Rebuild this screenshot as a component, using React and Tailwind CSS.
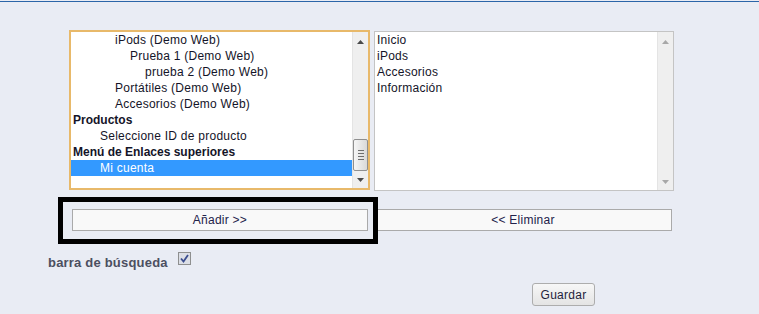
import React from 'react';

// left list: [label, indent(px), bold, selected]
const LEFT_ITEMS = [
  ['iPods (Demo Web)', 44, false],
  ['Prueba 1 (Demo Web)', 59, false],
  ['prueba 2 (Demo Web)', 74, false],
  ['Portátiles (Demo Web)', 44, false],
  ['Accesorios (Demo Web)', 44, false],
  ['Productos', 2, true],
  ['Seleccione ID de producto', 29, false],
  ['Menú de Enlaces superiores', 2, true],
  ['Mi cuenta', 29, false, true],
];

const RIGHT_ITEMS = ['Inicio', 'iPods', 'Accesorios', 'Información'];

const ArrowUp = ({ dim }) => (
  <svg width="7" height="4" viewBox="0 0 7 4">
    <path d="M0 4 L3.5 0 L7 4 Z" fill={dim ? '#a8a8a8' : '#4a4a4a'} />
  </svg>
);

const ArrowDown = ({ dim }) => (
  <svg width="7" height="4" viewBox="0 0 7 4">
    <path d="M0 0 L3.5 4 L7 0 Z" fill={dim ? '#a8a8a8' : '#4a4a4a'} />
  </svg>
);

const Scrollbar = ({ thumb, dim }) => (
  <div className="w-4 h-full bg-[#efefef] border-l border-[#e4e4e4] flex flex-col items-center">
    <div className="h-[17px] w-full flex items-center justify-center pt-[3px]">
      <ArrowUp dim={dim} />
    </div>
    <div className="flex-1 w-full flex flex-col justify-end">
      {thumb && (
        <div className="mx-auto mb-[3px] w-[15px] h-[32px] rounded-[2px] border border-[#8f8f8f] bg-gradient-to-r from-[#f6f6f6] to-[#d9d9d9] flex flex-col items-center justify-center gap-[2px]">
          <div className="w-[6px] h-px bg-[#6e6e6e]" />
          <div className="w-[6px] h-px bg-[#6e6e6e]" />
          <div className="w-[6px] h-px bg-[#6e6e6e]" />
          <div className="w-[6px] h-px bg-[#6e6e6e]" />
        </div>
      )}
    </div>
    <div className="h-[14px] w-full flex items-center justify-center pb-[3px]">
      <ArrowDown dim={dim} />
    </div>
  </div>
);

export default function App() {
  return (
    <div className="h-[314px] w-full bg-[#e9ecf4] font-['Liberation_Sans',Arial,sans-serif] text-[12px] overflow-hidden">
      {/* top rule */}
      <div className="mt-px h-px bg-[#2b65a8]" />

      {/* list boxes */}
      <div className="flex items-start pl-[69px] mt-[28px]">
        <div className="w-[301px] h-[160px] border-2 border-[#e8b96a] bg-white flex">
          <div className="flex-1">
            {LEFT_ITEMS.map(([label, indent, bold, sel]) => (
              <div
                key={label}
                className={`h-4 leading-4 whitespace-nowrap ${bold ? 'font-bold' : 'tracking-[0.25px]'} ${sel ? 'bg-[#3399ff] text-white' : 'text-[#141428]'}`}
                style={{ paddingLeft: indent }}
              >
                {label}
              </div>
            ))}
          </div>
          <Scrollbar thumb />
        </div>

        <div className="ml-[4px] mt-px w-[300px] h-[160px] border border-[#c4c4c4] bg-white flex">
          <div className="flex-1 pl-[2px]">
            {RIGHT_ITEMS.map((label) => (
              <div key={label} className="h-4 leading-4 text-[#141428] tracking-[0.25px]">
                {label}
              </div>
            ))}
          </div>
          <Scrollbar dim />
        </div>
      </div>

      {/* add / remove buttons */}
      <div className="flex pl-[72px] mt-[18px] gap-[6px]">
        <div className="relative">
          <button className="w-[296px] h-[22px] border border-[#aaaaaa] bg-[#f9f9f9] text-[#22224a] text-[12px] tracking-[0.25px]">
            Añadir &gt;&gt;
          </button>
          <div className="absolute -left-[14px] -top-[12px] w-[320px] h-[47px] border-[5px] border-black pointer-events-none" />
        </div>
        <button className="w-[298px] h-[22px] border border-[#aaaaaa] bg-[#f9f9f9] text-[#22224a] text-[12px] tracking-[0.25px]">
          &lt;&lt; Eliminar
        </button>
      </div>

      {/* search bar option */}
      <div className="h-[19px] flex items-start pl-[48px] mt-[21px]">
        <span className="mt-[3px] leading-4 font-bold text-[13px] tracking-[0.2px] text-[#4c4f60]">barra de búsqueda</span>
        <div className="ml-[10px] w-[13px] h-[13px] border border-[#8e8f8f] bg-[#dcdfe6] flex items-center justify-center">
          <svg width="9" height="9" viewBox="0 0 9 9">
            <path d="M1 4.5 L3.5 7.5 L8 1" fill="none" stroke="#3b4d8f" strokeWidth="1.8" />
          </svg>
        </div>
      </div>

      {/* save */}
      <div className="flex pl-[532px] mt-[12px]">
        <button className="w-[63px] h-[23px] rounded-[3px] border border-[#adadad] bg-gradient-to-b from-[#f7f7f7] to-[#e4e4e4] text-[#1e1e3c] text-[12px] tracking-[0.25px]">
          Guardar
        </button>
      </div>
    </div>
  );
}
